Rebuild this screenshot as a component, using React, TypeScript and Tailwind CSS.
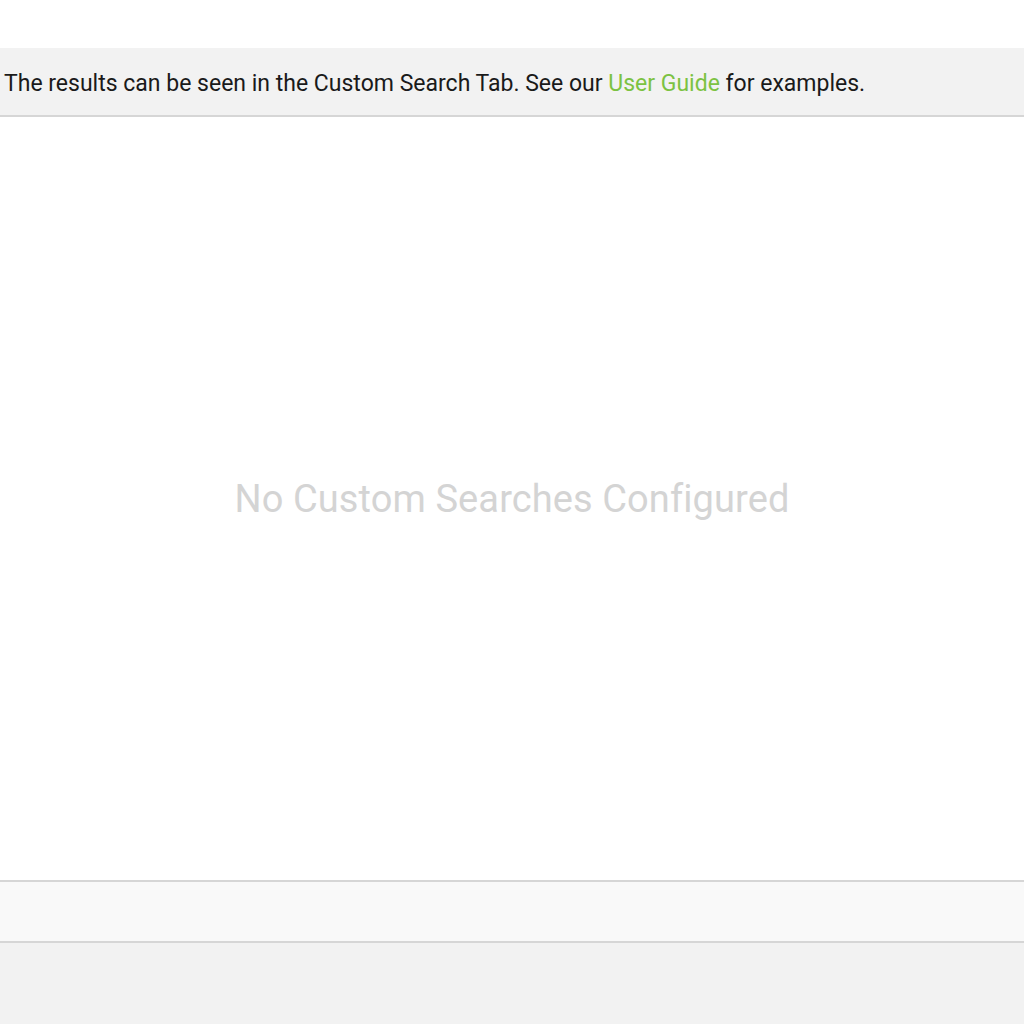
export default function App() {
  return (
    <div className="flex h-[1024px] w-[1024px] flex-col bg-white font-['Roboto',sans-serif]">
      <div className="h-[48px] shrink-0 bg-white" />
      <div className="flex h-[69px] shrink-0 items-center border-b-2 border-[#d6d6d6] bg-[#f2f2f2] pl-[4px] pt-[5px] text-[23px] text-[#1a1a1a]">
        <p>
          The results can be seen in the Custom Search Tab. See our{' '}
          <a className="text-[#7cc242]">User Guide</a> for examples.
        </p>
      </div>
      <div className="flex h-[763px] shrink-0 items-center justify-center bg-white pt-[2px]">
        <p className="text-[38px] tracking-[0.1px] text-[#d4d4d4]">No Custom Searches Configured</p>
      </div>
      <div className="h-[63px] shrink-0 border-y-2 border-[#d6d6d6] bg-[#f9f9f9]" />
      <div className="flex-1 bg-[#f2f2f2]" />
    </div>
  );
}
